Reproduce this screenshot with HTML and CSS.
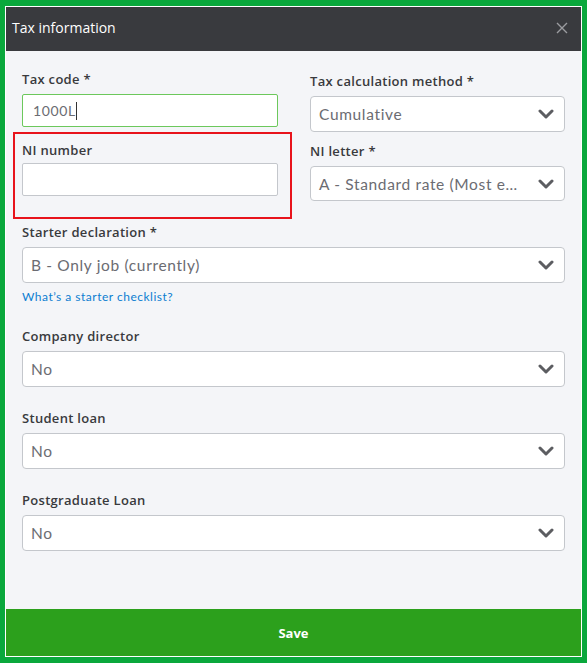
FILE: index.html
```html
<!DOCTYPE html>
<html>
<head>
<meta charset="utf-8">
<link rel="stylesheet" href="styles.css">
</head>
<body>
<div class="frame">
  <div class="dialog">
    <div class="header">
      <span class="title">Tax information</span>
      <svg class="close" width="12" height="12" viewBox="0 0 12 12"><path d="M1 1L11 11M11 1L1 11" stroke="#9b9ca0" stroke-width="1.4" fill="none"/></svg>
    </div>
    <div class="body">
      <div class="grid">
        <div class="col left">
          <div class="field">
            <label class="lbl">Tax code *</label>
            <div class="input active"><span class="val">1000L</span><span class="caret"></span></div>
          </div>
          <div class="field ni">
            <label class="lbl">NI number</label>
            <div class="input"></div>
          </div>
        </div>
        <div class="col right">
          <div class="field">
            <label class="lbl">Tax calculation method *</label>
            <div class="select"><span class="val">Cumulative</span><svg class="chev" width="16" height="10" viewBox="0 0 16 10"><path d="M2 2L8 8L14 2" stroke="#5c5d61" stroke-width="3" fill="none" stroke-linecap="round" stroke-linejoin="round"/></svg></div>
          </div>
          <div class="field f2">
            <label class="lbl">NI letter *</label>
            <div class="select s2"><span class="val">A - Standard rate (Most e…</span><svg class="chev" width="16" height="10" viewBox="0 0 16 10"><path d="M2 2L8 8L14 2" stroke="#5c5d61" stroke-width="3" fill="none" stroke-linecap="round" stroke-linejoin="round"/></svg></div>
          </div>
        </div>
      </div>
      <div class="field wide">
        <label class="lbl">Starter declaration *</label>
        <div class="select"><span class="val">B - Only job (currently)</span><svg class="chev" width="16" height="10" viewBox="0 0 16 10"><path d="M2 2L8 8L14 2" stroke="#5c5d61" stroke-width="3" fill="none" stroke-linecap="round" stroke-linejoin="round"/></svg></div>
        <a class="link">What’s a starter checklist?</a>
      </div>
      <div class="field wide">
        <label class="lbl">Company director</label>
        <div class="select"><span class="val">No</span><svg class="chev" width="16" height="10" viewBox="0 0 16 10"><path d="M2 2L8 8L14 2" stroke="#5c5d61" stroke-width="3" fill="none" stroke-linecap="round" stroke-linejoin="round"/></svg></div>
      </div>
      <div class="field wide">
        <label class="lbl">Student loan</label>
        <div class="select"><span class="val">No</span><svg class="chev" width="16" height="10" viewBox="0 0 16 10"><path d="M2 2L8 8L14 2" stroke="#5c5d61" stroke-width="3" fill="none" stroke-linecap="round" stroke-linejoin="round"/></svg></div>
      </div>
      <div class="field wide">
        <label class="lbl">Postgraduate Loan</label>
        <div class="select"><span class="val">No</span><svg class="chev" width="16" height="10" viewBox="0 0 16 10"><path d="M2 2L8 8L14 2" stroke="#5c5d61" stroke-width="3" fill="none" stroke-linecap="round" stroke-linejoin="round"/></svg></div>
      </div>
    </div>
    <div class="footer">
      <button class="save">Save</button>
    </div>
  </div>
</div>
</body>
</html>
```
FILE: styles.css
```css
* { box-sizing: border-box; }
html, body { margin: 0; padding: 0; }
body {
  width: 587px;
  height: 663px;
  background: #0aa83c;
  font-family: "Lato", "Liberation Sans", sans-serif;
}
.frame {
  padding: 6px 5px 6px 5px;
  height: 663px;
}
.dialog {
  border: 1px solid #ffffff;
  height: 100%;
  display: flex;
  flex-direction: column;
  background: #f4f5f8;
}
.header {
  height: 44px;
  background: #393a3e;
  display: flex;
  align-items: center;
  justify-content: space-between;
  padding: 0 13px 4px 6px;
  flex: none;
}
.title {
  color: #ffffff;
  font-family: "Open Sans", "Noto Sans", sans-serif;
  font-size: 14px;
}
.close { display: block; margin-top: 2px; }
.body {
  flex: 1;
  padding: 19px 16px 0 16px;
}
.grid {
  display: grid;
  grid-template-columns: 256px 255px;
  column-gap: 32px;
}
.col { display: flex; flex-direction: column; }
.field { display: flex; flex-direction: column; position: relative; }
.lbl {
  font-family: "Open Sans", "Noto Sans", sans-serif;
  font-size: 13px;
  font-weight: 600;
  color: #393a3d;
  line-height: 18px;
  height: 18px;
  letter-spacing: 0.3px;
}
.left .field .lbl { margin-bottom: 6px; }
.input {
  height: 33px;
  background: #fff;
  border: 1px solid #c4c7cc;
  border-radius: 2px;
  display: flex;
  align-items: center;
  padding-left: 10px;
}
.input.active { border-color: #6cc85c; }
.input .val { color: #6b6c72; font-size: 14px; letter-spacing: 0.6px; }
.caret { width: 1px; height: 18px; background: #333; margin-left: 0; }
.ni { margin-top: 14px; }
.ni .lbl { margin-bottom: 4px !important; }
.ni::after {
  content: "";
  position: absolute;
  left: -9px;
  right: -14px;
  top: -9px;
  bottom: -23px;
  border: 2px solid #e8141c;
}
.right { padding-top: 2px; }
.right .lbl { margin-bottom: 6px; }
.f2 { margin-top: 10px; }
.select {
  height: 36px;
  background: #fff;
  border: 1px solid #c4c7cc;
  border-radius: 4px;
  display: flex;
  align-items: center;
  justify-content: space-between;
  padding: 0 10px 0 8px;
}
.s2 { height: 35px; }
.select .val {
  color: #6b6c72;
  font-size: 15.5px;
  white-space: nowrap;
  letter-spacing: 0.65px;
}
.chev { display: block; }
.wide { margin-top: 22px; }
.wide .lbl { margin-bottom: 6px; }
.link {
  margin-top: 6px;
  font-size: 12px;
  line-height: 16px;
  color: #0d7ed1;
  letter-spacing: 0.5px;
}
.footer {
  flex: none;
  height: 47px;
}
.save {
  width: 100%;
  height: 100%;
  border: none;
  background: #2ca01c;
  color: #fff;
  font-family: "Open Sans", "Noto Sans", sans-serif;
  font-weight: 700;
  font-size: 13px;
  padding: 0;
}
```
